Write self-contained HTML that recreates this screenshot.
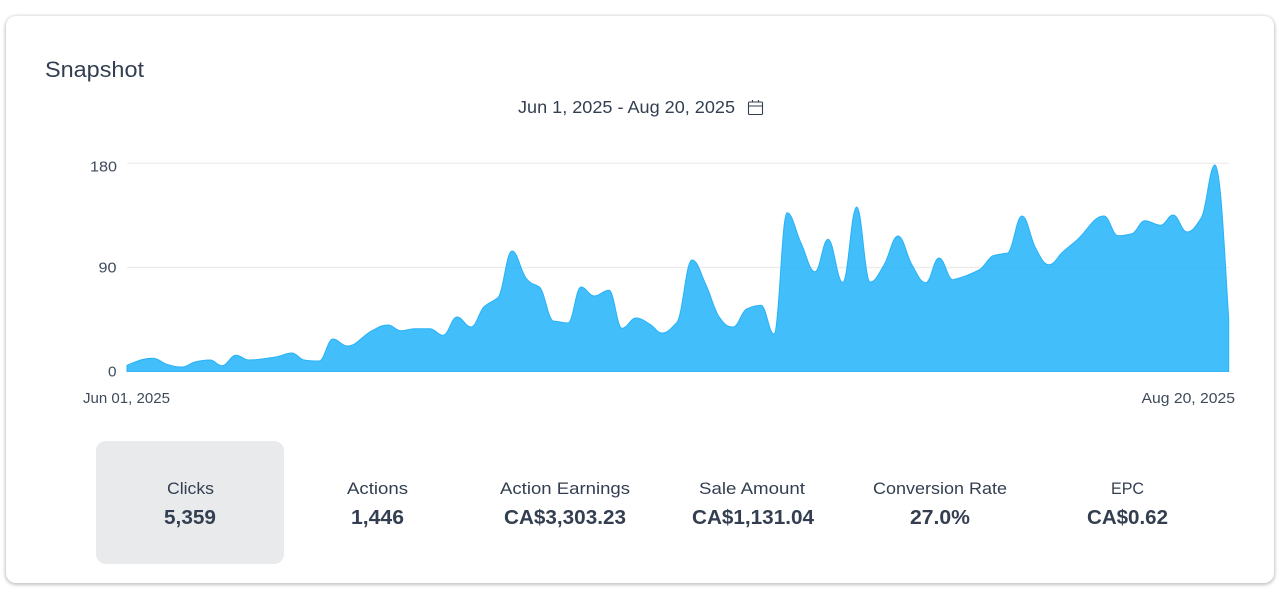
<!DOCTYPE html>
<html><head><meta charset="utf-8"><title>Snapshot</title>
<style>
html,body{margin:0;padding:0;width:1280px;height:592px;overflow:hidden;background:#fff}
.card{position:absolute;left:6px;top:16px;width:1268px;height:567px;border-radius:10px;background:#fff;box-shadow:0 1px 3px 1px rgba(60,70,85,.32)}
.box{position:absolute;left:96px;top:441px;width:188px;height:123px;border-radius:10px;background:#e9eaec}
svg{position:absolute;left:0;top:0}
text{font-family:"Liberation Sans",sans-serif;fill:#333f50}
.l{font-size:17px}.v{font-size:20px;font-weight:bold}.a{font-size:15px;fill:#3f4a5a}
</style></head><body>
<div class="card"></div><div class="box"></div>
<svg width="1280" height="592" viewBox="0 0 1280 592">
<defs><clipPath id="c"><rect x="120" y="150" width="1109.500" height="222"/></clipPath></defs>
<text x="45" y="77" font-size="22" textLength="99" lengthAdjust="spacingAndGlyphs">Snapshot</text>
<text x="518" y="113" font-size="17.500" textLength="217" lengthAdjust="spacingAndGlyphs">Jun 1, 2025 - Aug 20, 2025</text>
<g fill="none" stroke="#333f50" stroke-width="1.1"><rect x="748.500" y="102" width="14" height="12.500" rx="1"/><path d="M748.500 106H762.500M752.500 100V102M758.500 100V102"/></g>
<path d="M127 163.200H1229M127 267.500H1229" stroke="#ebebec" stroke-width="1.200" fill="none"/>
<path clip-path="url(#c)" fill="#0dacf9" fill-opacity=".78" stroke="#29b2f7" stroke-width="1" d="M127 372V365.300C137.400 361.100 142.600 358.300 153 358.300C158.600 358.300 161.400 362.600 167 364.300C173 366.100 176 367 182 367C187.200 367 189.800 363.300 195 362C201 360.500 204 360 210 360C214.800 360 217.200 365.700 222 365.700C227.600 365.700 230.400 355.300 236 355.300C241.200 355.300 243.800 360 249 360C260.200 360 265.800 358.500 277 356.700C283 355.700 286 353 292 353C296.400 353 298.600 358.400 303 359.700C309.400 361 312.600 361 319 361C324.600 361 327.400 339 333 339C338.600 339 341.400 346 347 346C357 346 362 335.800 372 330.700C378.400 327.400 381.600 325 388 325C393.200 325 395.800 330.700 401 330.700C406.600 330.700 409.400 328.700 415 328.700C421 328.700 424 328.700 430 328.700C435.200 328.700 437.800 335.300 443 335.300C448.600 335.300 451.400 317 457 317C462.600 317 465.400 327 471 327C476.200 327 478.800 312.300 484 306.700C489.600 301.700 492.400 302.200 498 297.700C503.600 291 506.400 251 512 251C517.600 251 520.400 270.700 526 278C531.200 284.800 533.800 283.600 539 286.700C544.600 290 547.400 317.600 553 321C559 321.300 562 323 568 323C573.200 323 575.800 287 581 287C586.200 287 588.800 296 594 296C600 296 603 290.300 609 290.300C614.200 290.300 616.800 328.300 622 328.300C627.600 328.300 630.400 318 636 318C641.600 318 644.400 321 650 324.300C654.800 327 657.200 333 662 333C668 333 671 328.300 677 322.300C683 314 686 260 692 260C697.600 260 700.400 273 706 285C711.200 296 713.800 308.600 719 316.700C724.600 325 727.400 327 733 327C738.200 327 740.800 313.400 746 309.300C752 306.500 755 305.800 761 305.300C766.200 305.300 768.800 334 774 334C779.200 334 781.800 212.700 787 212.700C792.600 212.700 795.400 231.200 801 243C806.600 254.800 809.400 271.700 815 271.700C820.200 271.700 822.800 239.300 828 239.300C833.900 239.300 836.800 282.300 842.700 282.300C848.300 282.300 851.100 207 856.700 207C862 207 864.700 282 870 282C875.600 282 878.400 274.200 884 265C889.600 255.800 892.400 236 898 236C903.600 236 906.400 255.500 912 265C917.500 274.300 920.200 282.700 925.700 282.700C931 282.700 933.700 258 939 258C944.600 258 947.400 279.700 953 279.700C963.400 277 968.600 275.200 979 270C984.600 267 987.400 258.500 993 255.700C999 254 1002 254 1008 253C1013.600 248 1016.400 216 1022 216C1027.500 216 1030.200 238.400 1035.700 248.300C1041 258 1043.700 264.700 1049 264.700C1054.600 264.700 1057.400 256.600 1063 251.700C1068.600 246.800 1071.400 244.900 1077 240C1087.800 230.500 1093.200 216 1104 216C1109.600 216 1112.400 235.700 1118 235.700C1124 235.700 1127 235 1133 233.300C1137.800 230 1140.200 220.700 1145 220.700C1151.300 220.700 1154.400 225.300 1160.700 225.300C1165.600 225.300 1168.100 215 1173 215C1178.600 215 1181.400 232 1187 232C1192.600 232 1195.400 226.700 1201 218.300C1206.600 210 1209.400 165 1215 165C1221 165 1225 265 1228.700 318V372Z"/>
<text class="a" x="90" y="171.500" textLength="27" lengthAdjust="spacingAndGlyphs">180</text>
<text class="a" x="98.500" y="272.500" textLength="18" lengthAdjust="spacingAndGlyphs">90</text>
<text class="a" x="108" y="376.500" textLength="8.500" lengthAdjust="spacingAndGlyphs">0</text>
<text class="a" x="83" y="403" textLength="87" lengthAdjust="spacingAndGlyphs">Jun 01, 2025</text>
<text class="a" x="1141.500" y="403" textLength="93.500" lengthAdjust="spacingAndGlyphs">Aug 20, 2025</text>
<text class="l" x="167" y="494" textLength="47" lengthAdjust="spacingAndGlyphs">Clicks</text>
<text class="v" x="164" y="524" textLength="52" lengthAdjust="spacingAndGlyphs">5,359</text>
<text class="l" x="347" y="494" textLength="61" lengthAdjust="spacingAndGlyphs">Actions</text>
<text class="v" x="351" y="524" textLength="53" lengthAdjust="spacingAndGlyphs">1,446</text>
<text class="l" x="500" y="494" textLength="130" lengthAdjust="spacingAndGlyphs">Action Earnings</text>
<text class="v" x="504" y="524" textLength="122" lengthAdjust="spacingAndGlyphs">CA$3,303.23</text>
<text class="l" x="699" y="494" textLength="106" lengthAdjust="spacingAndGlyphs">Sale Amount</text>
<text class="v" x="692" y="524" textLength="122" lengthAdjust="spacingAndGlyphs">CA$1,131.04</text>
<text class="l" x="873" y="494" textLength="134" lengthAdjust="spacingAndGlyphs">Conversion Rate</text>
<text class="v" x="910" y="524" textLength="60" lengthAdjust="spacingAndGlyphs">27.0%</text>
<text class="l" x="1111" y="494" textLength="33" lengthAdjust="spacingAndGlyphs">EPC</text>
<text class="v" x="1087" y="524" textLength="81" lengthAdjust="spacingAndGlyphs">CA$0.62</text>
</svg>
</body></html>
